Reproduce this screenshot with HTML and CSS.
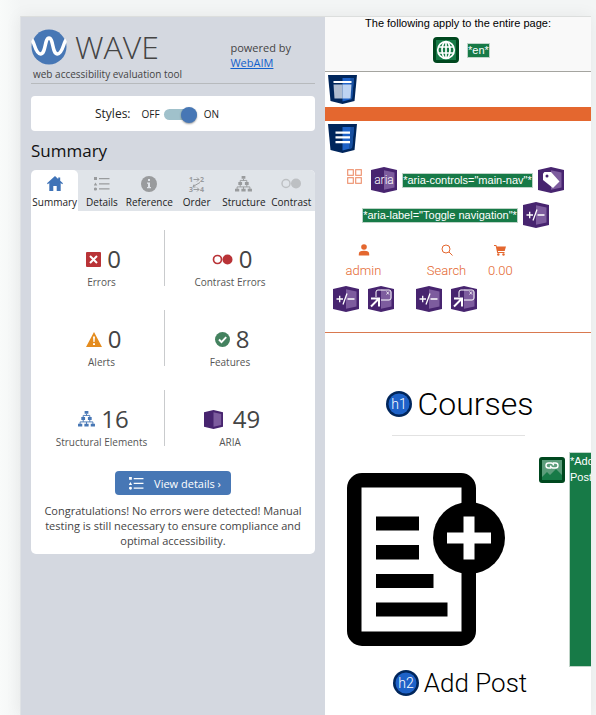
FILE: index.html
```html
<!DOCTYPE html>
<html lang="en">
<head>
<meta charset="utf-8">
<meta name="viewport" content="width=device-width, initial-scale=1">
<title>WAVE web accessibility evaluation tool</title>
<link rel="stylesheet" href="styles.css">
</head>
<body>
<svg class="sprite" aria-hidden="true">
  <symbol id="aria-box" viewBox="0 0 26 26">
    <path d="M0 3 13 0l13 3v20l-13 3L0 23z" fill="#47246f"/>
    <path d="M13 3.200 23.500 5.500v15l-10.500 2.300z" fill="#7d5c9e"/>
  </symbol>
  <symbol id="landmark" viewBox="0 0 29 29">
    <path d="M0 0h29l-2.500 26L14.500 29 2.500 26z" fill="#00265c"/>
    <path d="M14.500 3H26l-2 21-9.500 2.500z" fill="#1e62c8"/>
    <path d="M22.500 3H26l-2 21-3 1z" fill="#174f9f"/>
  </symbol>
  <symbol id="list" viewBox="0 0 16 14">
    <path d="M0 0h3v3H0zM1.500 5.500l1.800 3H-.3zM5 1h10.500v1.300H5zM5 6.300h10.500v1.300H5zM5 11.300h10.500v1.300H5z"/>
    <circle cx="1.500" cy="12" r="1.600"/>
  </symbol>
  <symbol id="tree" viewBox="0 0 18 17">
    <path d="M7 0h4v3H7zM3.500 6.500h4v3h-4zM10.500 6.500h4v3h-4zM0 13.500h4.500v3H0zM6.750 13.500h4.500v3h-4.500zM13.500 13.500H18v3h-4.500z"/>
    <path d="M9 3v2M5.500 7V4.700h7V7M5.500 9v2.500M12.500 9v2.500M2.200 14v-2.400h13.600V14M9 11.600V14" fill="none" stroke="currentColor"/>
  </symbol>
  <symbol id="expand" viewBox="0 0 26 26">
    <use href="#aria-box" width="26" height="26"/>
    <path d="M3.500 13h6.500M6.700 9.800v6.500M10 18.500l4-11M14.500 13h7" fill="none" stroke="#fff" stroke-width="1.300"/>
  </symbol>
  <symbol id="popup" viewBox="0 0 26 26">
    <use href="#aria-box" width="26" height="26"/>
    <path d="M8 11V6a2 2 0 0 1 2-2h11a2 2 0 0 1 2 2v6a2 2 0 0 1-2 2h-8" fill="none" stroke="#fff"/>
    <path d="m18.500 5.500 2.500 3m0-3-2.500 3" stroke="#fff" stroke-width=".8"/>
    <path d="m3 20.500 7.500-7.500M3 12.500h8v8" fill="none" stroke="#fff" stroke-width="2"/>
  </symbol>
</svg>

<div class="window">
  <aside class="sidebar">
    <header class="brand">
      <div>
        <div class="logo">
          <svg width="36" height="36" viewBox="0 0 36 36" aria-hidden="true">
            <circle cx="18" cy="18" r="17.500" fill="#4777b5"/>
            <path d="M1 11c2 1 3.500 14 8.500 14C15 25 13.500 9 18 9s3 16 8.500 16c5 0 6.500-13 8.500-14" fill="none" stroke="#fff" stroke-width="3.500"/>
          </svg>
          <span class="logo-name">WAVE</span>
        </div>
        <div class="tagline">web accessibility evaluation tool</div>
      </div>
      <p class="powered">powered by<br><a href="#webaim">WebAIM</a></p>
    </header>

    <div class="styles-box">
      <span class="styles-title">Styles:</span>
      <label class="switch"><span>OFF</span><input type="checkbox" role="switch" checked><span>ON</span></label>
    </div>

    <h2 class="section-title">Summary</h2>
    <section class="panel">
      <nav class="tabs">
        <button class="tab active" type="button">
          <svg width="16" height="15" viewBox="0 0 16 15"><path d="M8 0 0 7.300l.8.900L2.300 7v8h4v-5h3.400v5h4V7l1.500 1.200.8-.9-2.800-2.500V1.500h-2v1.400z" fill="#3f73b7"/></svg>Summary</button>
        <button class="tab" type="button"><svg width="16" height="14"><use href="#list"/></svg>Details</button>
        <button class="tab" type="button">
          <svg width="16" height="16" viewBox="0 0 16 16"><circle cx="8" cy="8" r="8"/><path d="M7 3h2v2H7zM6 6.500h3V11h1v1.300H6V11h1V7.700H6z" fill="#e0e4e9"/></svg>Reference</button>
        <button class="tab" type="button">
          <svg width="16" height="16" viewBox="0 0 16 16" class="order-icon"><text x="0" y="6">1</text><text x="11" y="6">2</text><text x="0" y="16">3</text><text x="11" y="16">4</text><path d="M4.500 3.500h5.500M8 1.500l2 2-2 2M4.500 13.500h5.500M8 11.500l2 2-2 2M11 6.500l-7 4M6.500 11H4l1-2.500" fill="none" stroke="currentColor"/></svg>Order</button>
        <button class="tab" type="button"><svg width="17" height="16"><use href="#tree"/></svg>Structure</button>
        <button class="tab" type="button">
          <svg width="20" height="11" viewBox="0 0 20 11" class="faint"><circle cx="5" cy="5.500" r="4" fill="none" stroke="currentColor" stroke-width="1.500"/><circle cx="15" cy="5.500" r="5"/></svg>Contrast</button>
      </nav>

      <div class="stats">
        <div class="stat">
          <div class="stat-value"><svg width="15" height="15" viewBox="0 0 15 15"><rect width="15" height="15" rx="1" fill="#b93337"/><path d="m4 4 7 7m0-7-7 7" stroke="#fff" stroke-width="2"/></svg>0</div>
          <div class="stat-label">Errors</div>
        </div>
        <div class="stat">
          <div class="stat-value"><svg width="21" height="11" viewBox="0 0 21 11"><circle cx="5.500" cy="5.500" r="4" fill="none" stroke="#b93337" stroke-width="1.700"/><circle cx="15.500" cy="5.500" r="5" fill="#b93337"/></svg>0</div>
          <div class="stat-label">Contrast Errors</div>
        </div>
        <div class="stat">
          <div class="stat-value"><svg width="16" height="15" viewBox="0 0 16 15"><path d="m8 0 8 15H0z" fill="#e48c1f"/><path d="M7 4.500h2L8.600 10H7.400zM7 11.200h2v1.900H7z" fill="#fff"/></svg>0</div>
          <div class="stat-label">Alerts</div>
        </div>
        <div class="stat">
          <div class="stat-value"><svg width="15" height="15" viewBox="0 0 15 15"><circle cx="7.500" cy="7.500" r="7.500" fill="#44825f"/><path d="m4 7.500 2.500 2.700 4.700-5" fill="none" stroke="#fff" stroke-width="1.900"/></svg>8</div>
          <div class="stat-label">Features</div>
        </div>
        <div class="stat">
          <div class="stat-value"><svg width="17" height="16" class="blue"><use href="#tree"/></svg>16</div>
          <div class="stat-label">Structural Elements</div>
        </div>
        <div class="stat">
          <div class="stat-value wide"><svg width="19" height="19" viewBox="0 0 26 26"><use href="#aria-box" width="26" height="26"/></svg>49</div>
          <div class="stat-label">ARIA</div>
        </div>
      </div>

      <button class="details-button" type="button"><svg width="15" height="13"><use href="#list"/></svg>View details ›</button>
      <p class="congrats">Congratulations! No errors were detected! Manual testing is still necessary to ensure compliance and optimal accessibility.</p>
    </section>
  </aside>

  <main class="page">
    <div class="page-note">
      <p>The following apply to the entire page:</p>
      <div class="note-row">
        <svg class="glow" width="26" height="26" viewBox="0 0 26 26"><rect width="26" height="26" rx="4" fill="#00481f"/><rect x="3" y="3" width="20" height="20" fill="#177a47"/><g fill="none" stroke="#fff" stroke-width="1.700"><circle cx="13" cy="13" r="8.300"/><ellipse cx="13" cy="13" rx="4" ry="8.300"/><path d="M13 4.500v17M5 10h16M5 16h16"/></g></svg>
        <span class="chip">*en*</span>
      </div>
    </div>

    <div class="landmark">
      <svg width="29" height="29" viewBox="0 0 29 29"><use href="#landmark"/><path d="M5.500 6h18v2h-18z" fill="#fff"/><path d="M5.500 9.500h9v14h-8z" fill="#b0bdd0"/><path d="M14.500 9.500h9l-1 14h-8z" fill="#bdd3f2"/></svg>
    </div>
    <div class="orange-bar"></div>
    <div class="landmark">
      <svg width="29" height="29" viewBox="0 0 29 29"><use href="#landmark"/><path d="M7.500 7.500h14.500v2.200H7.500zM7.500 12.200h14.500v2.200H7.500zM7.500 17h14.500v2.200H7.500z" fill="#fff"/></svg>
    </div>

    <div class="aria-rows">
      <div class="aria-row">
        <button class="menu-button" type="button" aria-label="Toggle navigation"><svg width="15" height="15" viewBox="0 0 15 15"><g fill="none" stroke="#ed8d69" stroke-width="1.100"><rect x=".7" y=".7" width="5.600" height="5.600"/><rect x="8.700" y=".7" width="5.600" height="5.600"/><rect x=".7" y="8.700" width="5.600" height="5.600"/><rect x="8.700" y="8.700" width="5.600" height="5.600"/></g></svg></button>
        <svg width="26" height="26" viewBox="0 0 26 26"><use href="#aria-box"/><text x="13" y="17" class="badge-text">aria</text></svg>
        <span class="chip">*aria-controls="main-nav"*</span>
        <svg width="26" height="26" viewBox="0 0 26 26"><use href="#aria-box"/><path d="M5 6.500 6.500 5H13l8.500 9.500-6.500 6.500L5 13z" fill="#fff"/><circle cx="9" cy="9" r="1.500" fill="#47246f"/></svg>
      </div>
      <div class="aria-row">
        <span class="chip">*aria-label="Toggle navigation"*</span>
        <svg width="26" height="26"><use href="#expand"/></svg>
      </div>
    </div>

    <nav class="shop-nav">
      <div class="nav-pair">
        <div class="nav-item">
          <a href="#admin"><svg width="12" height="12" viewBox="0 0 12 12"><circle cx="6" cy="3" r="2.800"/><path d="M.8 11.500V10c0-2 1.500-3.200 5.200-3.200s5.200 1.200 5.200 3.200v1.500z"/></svg>admin</a>
          <div class="nav-icons"><svg width="26" height="26"><use href="#expand"/></svg><svg width="26" height="26"><use href="#popup"/></svg></div>
        </div>
        <div class="nav-item">
          <a href="#search"><svg width="12" height="12" viewBox="0 0 12 12"><g fill="none" stroke="currentColor"><circle cx="5" cy="5" r="4"/><path d="m8 8 3.500 3.500"/></g></svg>Search</a>
          <div class="nav-icons"><svg width="26" height="26"><use href="#expand"/></svg><svg width="26" height="26"><use href="#popup"/></svg></div>
        </div>
      </div>
      <div class="nav-item">
        <a href="#cart"><svg width="12" height="12" viewBox="0 0 12 12"><path d="M0 1h2.300l.5 1.500H12L10.700 7H3.900l.2 1H10.500v1H3.200L1.700 2H0z"/><circle cx="4.300" cy="10.500" r="1.200"/><circle cx="9.500" cy="10.500" r="1.200"/></svg>0.00</a>
      </div>
    </nav>

    <h1 class="heading courses">
      <svg width="26" height="26" viewBox="0 0 26 26"><circle cx="13" cy="13" r="13" fill="#00265c"/><circle cx="13" cy="13" r="10.500" fill="#1e62c8"/><text x="13" y="18" class="badge-text large">h1</text></svg>
      Courses
    </h1>
    <hr class="rule">

    <div class="card-media">
      <svg class="document" width="158" height="173" viewBox="0 0 158 173">
        <path fill-rule="evenodd" d="M15 0h99a15 15 0 0 1 15 15v143a15 15 0 0 1-15 15H15a15 15 0 0 1-15-15V15A15 15 0 0 1 15 0zM14.500 14.500v144h100v-144z"/>
        <path d="M29 43.500h43v14H29zM29 72h43v14.500H29zM29 101h57.500v14H29zM29 129.500h71.500v14H29z"/>
        <circle cx="122" cy="65" r="36"/>
        <path d="M116.500 43.500h11v16H144v11h-16.500v16h-11v-16H100v-11h16.500z" fill="#fff"/>
      </svg>
      <svg class="alt-icon" width="26" height="26" viewBox="0 0 26 26"><rect width="26" height="26" rx="3" fill="#00481f"/><rect x="3" y="3" width="20" height="20" fill="#5c9d7b"/><path d="m3 20 5-5 3 3 6-6 6 6v5H3z" fill="#177a47"/><g fill="none" stroke="#fff" stroke-width="1.400"><path d="M12 11H9.500a2.500 2.500 0 0 1 0-5H12c1.500 0 2.500 1 2.500 2.500"/><path d="M14 6h2.500a2.500 2.500 0 0 1 0 5H14c-1.500 0-2.500-1-2.500-2.500"/></g></svg>
      <div class="alt-text">*Add Post*</div>
    </div>

    <h2 class="heading add-post">
      <svg width="26" height="26" viewBox="0 0 26 26"><circle cx="13" cy="13" r="13" fill="#00265c"/><circle cx="13" cy="13" r="10.500" fill="#1e62c8"/><text x="13" y="18" class="badge-text large">h2</text></svg>
      Add Post
    </h2>
  </main>
</div>
</body>
</html>
```
FILE: styles.css
```css
* { box-sizing: border-box; }
body {
  margin: 0;
  padding: 16px 5px 0 20px;
  min-height: 100vh;
  display: flex;
  overflow: hidden;
  background: linear-gradient(90deg, #f9fbfa, #f3f5f5 20px, #f3f5f5);
  font-family: "Open Sans", "Noto Sans", sans-serif;
  color: #444;
}
p, h1, h2 { margin: 0; font-weight: 400; }
svg { flex: none; fill: currentColor; overflow: visible; }
button { border: 0; background: none; padding: 0; font: inherit; color: inherit; }
.sprite { position: absolute; width: 0; height: 0; }

.window {
  flex: 1;
  min-width: 0;
  display: flex;
  border-top: 1px solid #dcdedd;
  border-left: 1px solid #dfe2e5;
  box-shadow: 0 0 16px rgba(0, 0, 0, 0.06);
}

/* Sidebar */
.sidebar {
  flex: none;
  width: 304px;
  padding: 10px;
  background: #d4d8e0;
}
.brand {
  display: flex;
  justify-content: space-between;
  height: 57px;
  border-bottom: 1px solid #b7babd;
}
.logo { display: flex; align-items: center; gap: 8px; height: 40px; }
.logo-name { font-size: 32px; font-weight: 300; line-height: 40px; }
.tagline { padding-left: 2px; font-size: 10px; line-height: 14px; white-space: nowrap; }
.powered { padding: 13px 24px 0 0; font-size: 11px; line-height: 15px; }
.powered a { color: #1260cc; }

.styles-box {
  display: flex;
  align-items: center;
  gap: 11px;
  margin-top: 12px;
  padding: 0 64px;
  height: 35px;
  border-radius: 4px;
  background: #fff;
  color: #222;
}
.styles-title { font-size: 12px; }
.switch { display: flex; align-items: center; gap: 4px; font-size: 10px; }
.switch input {
  appearance: none;
  display: flex;
  align-items: center;
  justify-content: flex-end;
  width: 33px;
  height: 11px;
  margin: 2px 3px 0 0;
  border-radius: 6px;
  background: #a0c1cb;
}
.switch input::before {
  content: "";
  width: 16px;
  height: 16px;
  border-radius: 50%;
  background: #4777b5;
  box-shadow: 0 1px 2px rgba(0, 0, 0, 0.4);
}
.section-title { margin: 8px 0; font-size: 17px; line-height: 23px; color: #111; }

.panel {
  padding-bottom: 6px;
  border-radius: 5px;
  background: #fff;
  overflow: hidden;
  text-align: center;
}
.tabs { display: flex; background: #e0e4e9; height: 41px; }
.tab {
  flex: 1 1 0;
  min-width: 0;
  display: grid;
  grid-template-rows: 27px 11px;
  justify-content: center;
  place-items: center;
  align-content: start;
  font-size: 10px;
  line-height: 11px;
  color: #222;
}
.tab svg { color: #999b9d; }
.tab .faint { color: #bdc0c3; }
.tab.active { background: #fff; border-radius: 5px 5px 0 0; }
.order-icon { font-size: 7px; font-weight: 700; }

.stats {
  display: grid;
  grid-template-columns: 134px 1fr;
  row-gap: 24px;
  padding-top: 19px;
}
.stat { height: 56px; padding: 14px 0 0 8px; }
.stat:nth-child(odd) { border-right: 1px solid #c9cbcd; }
.stat:nth-child(even) { padding: 14px 20px 0 0; }
.stat-value {
  display: flex;
  align-items: center;
  justify-content: center;
  gap: 6px;
  padding-left: 4px;
  font-size: 24px;
  line-height: 30px;
}
.stat-value.wide { gap: 10px; }
.blue { color: #4777b5; }
.stat-label { font-size: 10px; line-height: 16px; white-space: nowrap; color: #555; }
.details-button {
  display: inline-flex;
  align-items: center;
  gap: 10px;
  margin-top: 25px;
  padding: 0 10px 0 14px;
  height: 24px;
  border-radius: 4px;
  background: #4777b5;
  color: #fff;
  font-size: 11px;
}
.congrats { padding: 8px 8px 0; font-size: 11px; line-height: 15px; }

/* Evaluated page */
.page {
  flex: 1;
  min-width: 0;
  overflow: hidden;
  background: #fff;
  color: #000;
  font-family: "Liberation Sans", Arial, sans-serif;
  font-size: 11px;
}
.page-note {
  height: 55px;
  border-bottom: 1px solid #a5a5a0;
  background: #f9f9f9;
  text-align: center;
}
.page-note p { line-height: 13px; }
.note-row { display: flex; align-items: center; justify-content: center; gap: 8px; padding: 7px 0 0 7px; }
.glow { border-radius: 4px; box-shadow: 0 0 2px 1px #fff; }
.chip {
  background: #177a47;
  color: #fff;
  line-height: 13px;
  border: 1px solid #bfd4c8;
  white-space: nowrap;
}
.landmark { display: flex; padding: 3px; }
.orange-bar { height: 14px; background: #e4672f; }
.badge-text {
  fill: #fff;
  font-family: Roboto, sans-serif;
  font-weight: 300;
  font-size: 12px;
  text-anchor: middle;
}
.badge-text.large { font-size: 14px; }
.aria-rows { display: grid; gap: 9px; padding: 11px 5px 0 0; }
.aria-row { display: flex; align-items: center; justify-content: center; gap: 5px; }
.menu-button { display: flex; align-self: flex-start; padding: 2px 4px 0 0; }

.shop-nav {
  display: flex;
  gap: 11px;
  padding: 16px 0 20px 8px;
  border-bottom: 1px solid #d9794f;
  font-family: Roboto, sans-serif;
  font-weight: 300;
  font-size: 13px;
}
.nav-pair { display: flex; gap: 22px; }
.nav-item a {
  display: flex;
  flex-direction: column;
  align-items: center;
  gap: 6px;
  line-height: 18px;
  color: #e4672f;
  text-decoration: none;
}
.nav-icons { display: flex; gap: 9px; margin-top: 6px; }

.heading {
  display: flex;
  align-items: center;
  justify-content: center;
  gap: 5px;
  font-family: Roboto, sans-serif;
  font-weight: 300;
  padding-left: 4px;
}
.courses { padding-top: 51px; font-size: 32px; line-height: 40px; }
.rule { width: 50%; margin: 11px auto 16px; border: 0; border-top: 1px solid #e2e2e2; }
.card-media { display: flex; align-items: flex-start; padding-left: 22px; }
.document { margin: 21px 34px 21px 0; }
.alt-icon { margin: 5px 4px 0 0; }
.alt-text {
  flex: none;
  align-self: stretch;
  width: 44px;
  background: #177a47;
  color: #fff;
  line-height: 16px;
  border: 1px solid #bfd4c8;
}
.add-post { font-size: 26px; line-height: 32px; }
```
